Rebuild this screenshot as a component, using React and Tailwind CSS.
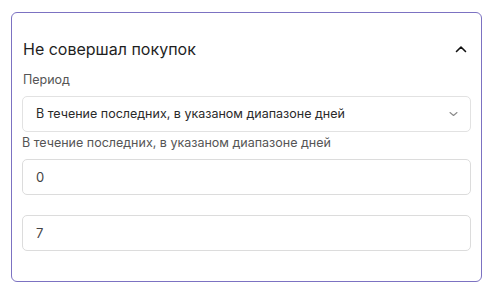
import React, { useState } from 'react';

// Маленькие иконки-шевроны
function ChevronUp() {
    return (
        <svg width="12" height="8" viewBox="0 0 12 8" fill="none">
            <path d="M1.5 6.5L6 2L10.5 6.5" stroke="#111" strokeWidth="1.6" strokeLinecap="round" strokeLinejoin="round" />
        </svg>
    );
}

function ChevronDown() {
    return (
        <svg width="9" height="6" viewBox="0 0 9 6" fill="none">
            <path d="M1 1.5L4.5 4.5L8 1.5" stroke="#8a8a8a" strokeWidth="1.1" strokeLinecap="round" strokeLinejoin="round" />
        </svg>
    );
}

export default function App() {
    const [from, setFrom] = useState('0');
    const [to, setTo] = useState('7');

    return (
        <div className="min-h-screen bg-white pt-[12px] pl-[11px]" style={{ fontFamily: 'Inter, "Noto Sans", sans-serif' }}>
            <div className="w-[471px] h-[270px] border border-[#7c72c2] rounded-[6px] px-[10px] pt-[25px]">
                {/* Заголовок блока */}
                <div className="flex items-center justify-between h-[22px] pl-[1px] pr-[4px]">
                    <h2 className="text-[16px] leading-[22px] text-[#1f1f1f]">Не совершал покупок</h2>
                    <ChevronUp />
                </div>

                {/* Период */}
                <label className="block mt-[11px] pl-[1px] text-[12.5px] leading-[18px] text-[#555]">Период</label>
                <div className="mt-[7px] h-[36px] flex items-center justify-between border border-[#e2e2e2] rounded-[5px] pl-[13px] pr-[12px]">
                    <span className="text-[12.5px] text-[#2a2a2a]">В течение последних, в указаном диапазоне дней</span>
                    <ChevronDown />
                </div>

                <label className="block mt-[2px] text-[12.5px] leading-[18px] text-[#555]">В течение последних, в указаном диапазоне дней</label>
                <input
                    value={from}
                    onChange={(e) => setFrom(e.target.value)}
                    className="mt-[7px] block w-full h-[36px] border border-[#dcdcdc] rounded-[5px] pl-[13px] text-[13px] text-[#444] outline-none"
                />
                <input
                    value={to}
                    onChange={(e) => setTo(e.target.value)}
                    className="mt-[20px] block w-full h-[36px] border border-[#dcdcdc] rounded-[5px] pl-[13px] text-[13px] text-[#444] outline-none"
                />
            </div>
        </div>
    );
}
